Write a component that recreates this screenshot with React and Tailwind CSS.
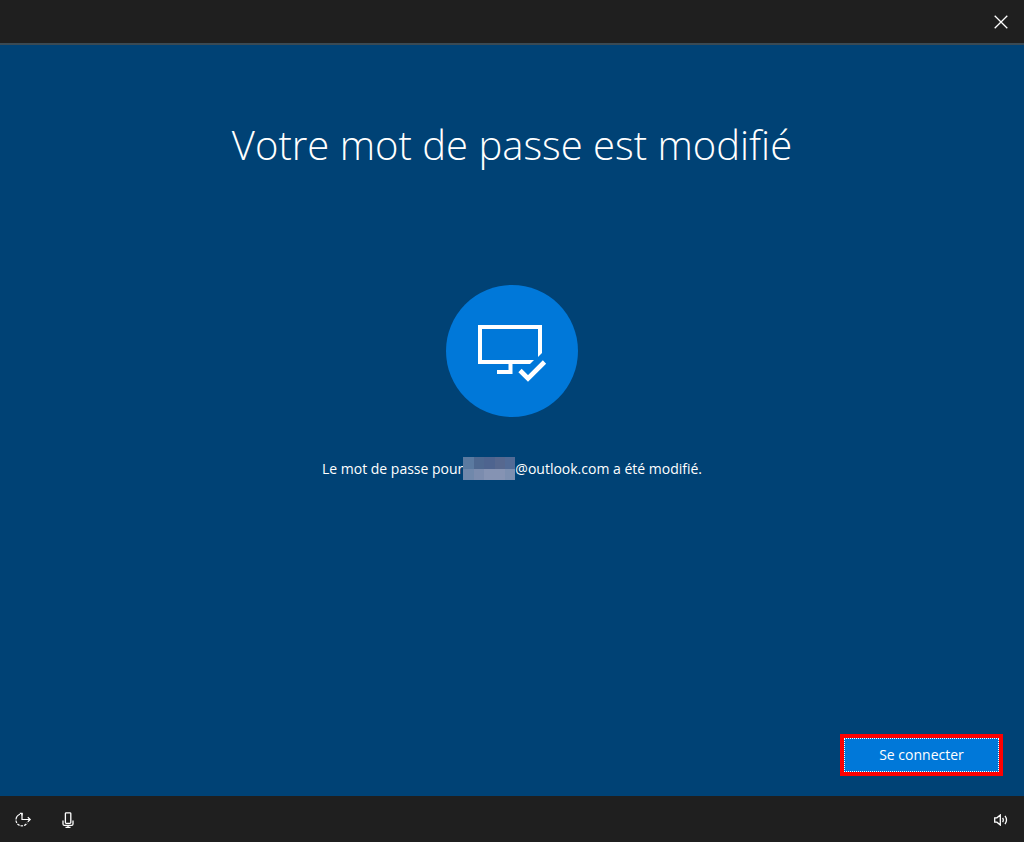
function CloseIcon() {
  return (
    <svg width="14" height="14" viewBox="0 0 14 14" fill="none" stroke="#fff" strokeWidth="1.3" aria-hidden="true">
      <path d="M0.7 0.7 13.3 13.3M13.3 0.7 0.7 13.3" />
    </svg>
  )
}

function EaseOfAccessIcon() {
  return (
    <svg width="18" height="16" viewBox="0 0 18 16" fill="none" stroke="#fff" strokeWidth="1.2" aria-hidden="true">
      <path d="M8 1v6.500h8" />
      <path d="M13.800 5.200 16.200 7.500 13.800 9.800M5.800 1.400H8V3.600" />
      <path d="M6 2.200A6 6 0 0 0 2 7.500" />
      <path d="M2 8.500A6 6 0 0 0 13.200 10.800" strokeDasharray="2.600 1" />
    </svg>
  )
}

function MicIcon() {
  return (
    <svg width="12" height="16" viewBox="0 0 12 16" fill="none" stroke="#fff" strokeWidth="1.3" aria-hidden="true">
      <rect x="3.4" y="0.8" width="5.4" height="10.6" rx="0.8" />
      <path d="M1 8.5v3.4a1.5 1.5 0 0 0 1.5 1.5h7a1.5 1.5 0 0 0 1.5-1.5V8.5M6 13.4v2M3.5 15.3h5" />
    </svg>
  )
}

function VolumeIcon() {
  return (
    <svg width="14" height="12" viewBox="0 0 14 12" fill="none" stroke="#fff" strokeWidth="1.3" aria-hidden="true">
      <path d="M0.7 3.8h2.2L6.3 1v10L2.9 8.2H0.7z" />
      <path d="M8.6 3.8q1.4 2.2 0 4.4M11 1.9q3 4.1 0 8.2" />
    </svg>
  )
}

function ScreenCheckIcon() {
  return (
    <svg width="84" height="72" viewBox="0 0 84 72" fill="#fff" aria-hidden="true">
      <path d="M8 10H72V38L68 42V14H12V45H64L60 49H42.500V59H27V55H38.500V49H8Z" />
      <path d="M50 55.500 58 63.500 74.500 47" fill="none" stroke="#fff" strokeWidth="4.600" />
    </svg>
  )
}

// hides the local part of the address
const mosaic = [
  'bg-[#5b7aa0]', 'bg-[#4e6890]', 'bg-[#4e648f]', 'bg-[#56688f]', 'bg-[#526b96]',
  'bg-[#7088ab]', 'bg-[#7b8cae]', 'bg-[#8593b3]', 'bg-[#8593b3]', 'bg-[#7c8fb0]',
]

function HiddenName() {
  return (
    <span className="grid h-[23px] w-[52px] shrink-0 grid-cols-5 grid-rows-2">
      {mosaic.map((color, i) => (
        <span key={i} className={color} />
      ))}
    </span>
  )
}

export default function App() {
  return (
    <div className="flex min-h-screen flex-col bg-[#004275] font-['Open_Sans','Noto_Sans',sans-serif] text-white">
      <header className="flex h-[45px] items-center justify-end border-b-2 border-[#3a4a54] bg-[#1f1f1f] px-3.5">
        <button type="button" aria-label="Fermer" className="p-0.5">
          <CloseIcon />
        </button>
      </header>

      <main className="flex flex-1 flex-col items-center pt-[68px]">
        <h1 className="text-center text-[40px] leading-[64px] font-light">Votre mot de passe est modifié</h1>

        <div className="mt-[108px] flex size-[132px] items-center justify-center rounded-full bg-[#0078d9]">
          <ScreenCheckIcon />
        </div>

        <p className="mt-10 flex items-center text-sm whitespace-pre">
          <span>Le mot de passe pour</span>
          <HiddenName />
          <span>@outlook.com a été modifié.</span>
        </p>

        <div className="mt-auto flex w-full justify-end px-[21px] pb-5">
          <div className="border-4 border-[#fe0000] bg-[#0078d9]">
            <button type="button" className="h-[34px] w-[155px] border border-dotted border-white text-sm">
              Se connecter
            </button>
          </div>
        </div>
      </main>

      <footer className="flex h-[46px] items-center bg-[#1f1f1f] px-3.5 pt-0.5">
        <button type="button" aria-label="Options d’ergonomie">
          <EaseOfAccessIcon />
        </button>
        <button type="button" aria-label="Microphone" className="ml-[30px]">
          <MicIcon />
        </button>
        <button type="button" aria-label="Volume" className="ml-auto mr-0.5">
          <VolumeIcon />
        </button>
      </footer>
    </div>
  )
}
